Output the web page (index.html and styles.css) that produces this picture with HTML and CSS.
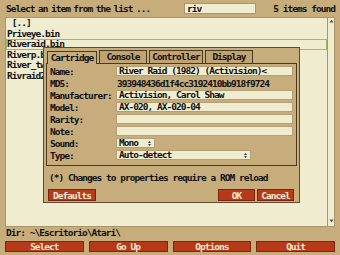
FILE: index.html
```html
<!DOCTYPE html>
<html lang="es">
<head>
    <meta charset="UTF-8">
    <title>Stella - Launcher</title>
    <link rel="stylesheet" href="styles.css">
</head>
<body>
<div class="app">
    <div class="top">
        <span class="title">Select an item from the list ...</span>
        <span class="search">riv</span>
        <span class="count">5 items found</span>
    </div>

    <div class="list">
        <ul class="rows">
            <li>&nbsp;[..]</li>
            <li>Priveye.bin</li>
            <li class="sel">Riveraid.bin</li>
            <li>Riverp.b</li>
            <li>River_tw</li>
            <li>Rivraid2</li>
        </ul>
        <div class="scroll">
            <svg width="5" height="4" viewBox="0 0 5 4"><path d="M2.5 0.5 L4.5 3.5 L0.5 3.5 Z" fill="#555"/></svg>
            <svg width="5" height="4" viewBox="0 0 5 4"><path d="M0.5 0.5 L4.5 0.5 L2.5 3.5 Z" fill="#555"/></svg>
        </div>
    </div>

    <div class="dir">Dir: ~\Escritorio\Atari\</div>

    <div class="actions">
        <button class="btn">Select</button>
        <button class="btn">Go Up</button>
        <button class="btn">Options</button>
        <button class="btn">Quit</button>
    </div>

    <!-- game properties dialog, drawn over the list -->
    <div class="dialog">
        <div class="tabs">
            <span class="tab active">Cartridge</span>
            <span class="tab">Console</span>
            <span class="tab">Controller</span>
            <span class="tab">Display</span>
        </div>
        <div class="pane">
            <div class="field"><span class="lbl">Name:</span><span class="input">River Raid (1982) (Activision)&lt;</span></div>
            <div class="field"><span class="lbl">MD5:</span><span class="value">393948436d1f4cc3192410bb918f9724</span></div>
            <div class="field"><span class="lbl">Manufacturer:</span><span class="input">Activision, Carol Shaw</span></div>
            <div class="field"><span class="lbl">Model:</span><span class="input">AX-020, AX-020-04</span></div>
            <div class="field"><span class="lbl">Rarity:</span><span class="input"></span></div>
            <div class="field"><span class="lbl">Note:</span><span class="input"></span></div>
            <div class="field"><span class="lbl">Sound:</span><span class="select small">Mono<svg width="3" height="5" viewBox="0 0 3 5"><path d="M1.5 0 L3 2 L0 2 Z M0 3 L3 3 L1.5 5 Z" fill="#333"/></svg></span></div>
            <div class="field"><span class="lbl">Type:</span><span class="select wide">Auto-detect<svg width="3" height="5" viewBox="0 0 3 5"><path d="M1.5 0 L3 2 L0 2 Z M0 3 L3 3 L1.5 5 Z" fill="#333"/></svg></span></div>
        </div>
        <p class="note">(*) Changes to properties require a ROM reload</p>
        <div class="dlg-buttons">
            <button class="btn">Defaults</button>
            <span class="spacer"></span>
            <button class="btn">OK</button>
            <button class="btn">Cancel</button>
        </div>
    </div>
</div>
</body>
</html>
```

FILE: styles.css
```css
body {
    margin: 0;
    background-color: #c8ad7c;
    font-family: "DejaVu Sans Mono", "Liberation Mono", monospace;
    font-weight: bold;
    font-size: 9.5px;
    letter-spacing: -0.97px;
    color: #111;
}
.app {
    position: relative;
    width: 340px;
    height: 255px;
    overflow: hidden;
}
.top {
    display: flex;
    align-items: center;
    height: 17px;
    padding: 0 5px 0 6px;
}
.title {
    width: 178px;
    word-spacing: -1.3px;
}
.search {
    width: 68px;
    height: 9px;
    line-height: 9px;
    padding-left: 2px;
    border: 1px solid #a8956a;
    background-color: #f0ecd0;
}
.count {
    margin-left: auto;
}
.list {
    position: relative;
    height: 208px;
    margin: 0 5px;
    border: 1px solid #a8956a;
    background-color: #f0ecd0;
}
.rows {
    list-style: none;
    margin: 0;
    padding: 0;
}
.rows li {
    height: 10.5px;
    line-height: 10.5px;
    padding-left: 1px;
    margin-right: 7px;
    white-space: nowrap;
    box-sizing: border-box;
}
.rows li.sel {
    outline: 1px solid #9cbb5c;
    outline-offset: -1px;
}
.scroll {
    position: absolute;
    top: 0;
    right: 0;
    bottom: 0;
    width: 6px;
    border-left: 1px solid #a8956a;
    display: flex;
    flex-direction: column;
    justify-content: space-between;
    align-items: center;
    padding: 1px 0 3px;
}
.dir {
    height: 9px;
    line-height: 9px;
    padding-left: 6px;
    margin-top: 1px;
}
.actions {
    display: flex;
    gap: 5px;
    margin: 4px 5px 0;
}
.actions .btn {
    flex: 1;
    height: 11px;
}
.btn {
    font: inherit;
    letter-spacing: inherit;
    color: #f6ead2;
    background-color: #b6391a;
    border: 1px solid #7c2610;
    padding: 0;
    line-height: 9px;
}

/* dialog */
.dialog {
    position: absolute;
    left: 43px;
    top: 47px;
    width: 251px;
    height: 154px;
    border: 1px solid #5c4a2e;
    background-color: #c8ad7c;
    padding: 0 2px;
}
.tabs {
    display: flex;
    gap: 2px;
    padding: 2px 0 0 1px;
    height: 13px;
}
.tab {
    height: 13px;
    line-height: 12px;
    text-align: center;
    border: 1px solid #4a3a22;
    border-bottom: none;
    box-sizing: border-box;
    background-color: #c0a373;
}
.tab:nth-child(1) { width: 50px; }
.tab:nth-child(2) { width: 48px; }
.tab:nth-child(3) { width: 54px; }
.tab:nth-child(4) { width: 48px; }
.tab.active {
    background-color: #c8ad7c;
    position: relative;
    top: 1px;
    height: 13px;
}
.pane {
    border: 1px solid #4a3a22;
    padding: 1px 2px 3px 3px;
    height: 97px;
}
.field {
    display: flex;
    align-items: center;
    height: 12px;
}
.lbl {
    width: 66px;
    flex: none;
}
.input {
    width: 173px;
    height: 8px;
    line-height: 8px;
    padding-left: 2px;
    border: 1px solid #b4a076;
    background-color: #f0ecd0;
    white-space: nowrap;
    overflow: hidden;
}
.value {
    padding-left: 1px;
}
.select {
    display: flex;
    justify-content: space-between;
    align-items: center;
    height: 8px;
    line-height: 8px;
    padding: 0 3px 0 2px;
    border: 1px solid #b4a076;
    background-color: #f0ecd0;
}
.select.small { width: 32px; }
.select.wide { width: 128px; }
.note {
    margin: 0;
    height: 23px;
    line-height: 24px;
    padding-left: 3px;
}
.dlg-buttons {
    display: flex;
    gap: 2px;
    padding: 0 3px 0 2px;
}
.dlg-buttons .btn {
    width: 37px;
    height: 12px;
}
.dlg-buttons .btn:first-child {
    width: 48px;
}
.spacer {
    flex: 1;
}
```
